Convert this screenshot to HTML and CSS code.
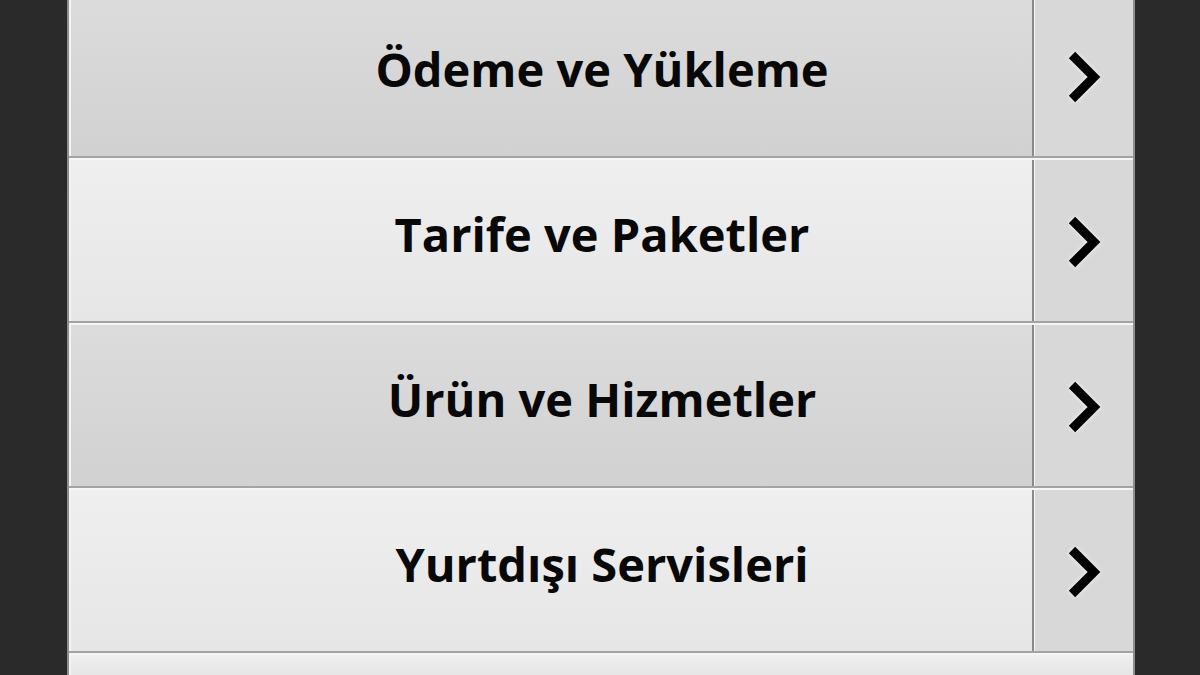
FILE: index.html
```html
<!DOCTYPE html>
<html lang="tr">
<head>
<meta charset="utf-8">
<title>Menü</title>
<link rel="stylesheet" href="styles.css">
</head>
<body>
<div class="panel">
  <div class="row row-dark first">
    <div class="label">Ödeme ve Yükleme</div>
    <div class="arrow"><svg width="38" height="56" viewBox="0 0 38 56"><polyline points="6,6 28,28 6,50" fill="none" stroke="#000" stroke-width="9" stroke-linejoin="miter" stroke-linecap="butt"/></svg></div>
  </div>
  <div class="row row-light">
    <div class="label">Tarife ve Paketler</div>
    <div class="arrow"><svg width="38" height="56" viewBox="0 0 38 56"><polyline points="6,6 28,28 6,50" fill="none" stroke="#000" stroke-width="9" stroke-linejoin="miter" stroke-linecap="butt"/></svg></div>
  </div>
  <div class="row row-dark">
    <div class="label">Ürün ve Hizmetler</div>
    <div class="arrow"><svg width="38" height="56" viewBox="0 0 38 56"><polyline points="6,6 28,28 6,50" fill="none" stroke="#000" stroke-width="9" stroke-linejoin="miter" stroke-linecap="butt"/></svg></div>
  </div>
  <div class="row row-light">
    <div class="label">Yurtdışı Servisleri</div>
    <div class="arrow"><svg width="38" height="56" viewBox="0 0 38 56"><polyline points="6,6 28,28 6,50" fill="none" stroke="#000" stroke-width="9" stroke-linejoin="miter" stroke-linecap="butt"/></svg></div>
  </div>
  <div class="row row-light last">
    <div class="label"></div>
  </div>
</div>
</body>
</html>
```
FILE: styles.css
```css
html, body {
  margin: 0;
  padding: 0;
  height: 100%;
  overflow: hidden;
}
body {
  background: #2a2a2a;
  font-family: "Open Sans", "DejaVu Sans", sans-serif;
}
.panel {
  width: 1068px;
  margin-left: 67px;
  border-left: 2px solid #8e8e8e;
  border-right: 2px solid #8e8e8e;
  box-sizing: border-box;
  background: #e8e8e8;
}
.row {
  display: flex;
  height: 165px;
  box-sizing: border-box;
  border-top: 2px solid #f6f6f6;
  border-bottom: 2px solid #a3a3a3;
}
.row.first {
  margin-top: -7px;
}
.row.last {
  height: 22px;
  border-bottom: 0;
}
.row-dark {
  background: linear-gradient(#dcdcdc, #d1d1d1);
}
.row-light {
  background: linear-gradient(#efefef, #e6e6e6);
}
.label {
  flex: 1;
  display: flex;
  align-items: center;
  justify-content: center;
  padding-left: 101px;
  padding-bottom: 14px;
  font-size: 47px;
  font-weight: 700;
  color: #080808;
  border-left: 2px solid #f4f4f4;
}
.arrow {
  width: 99px;
  display: flex;
  align-items: center;
  justify-content: center;
  background: #d8d8d8;
  border-left: 2px solid #8a8a8a;
  box-shadow: inset 1px 0 0 #f4f4f4;
}
.arrow svg {
  display: block;
  margin-left: 3px;
  margin-top: 3px;
  filter: drop-shadow(0 0 2px rgba(255,255,255,0.9));
}
```
